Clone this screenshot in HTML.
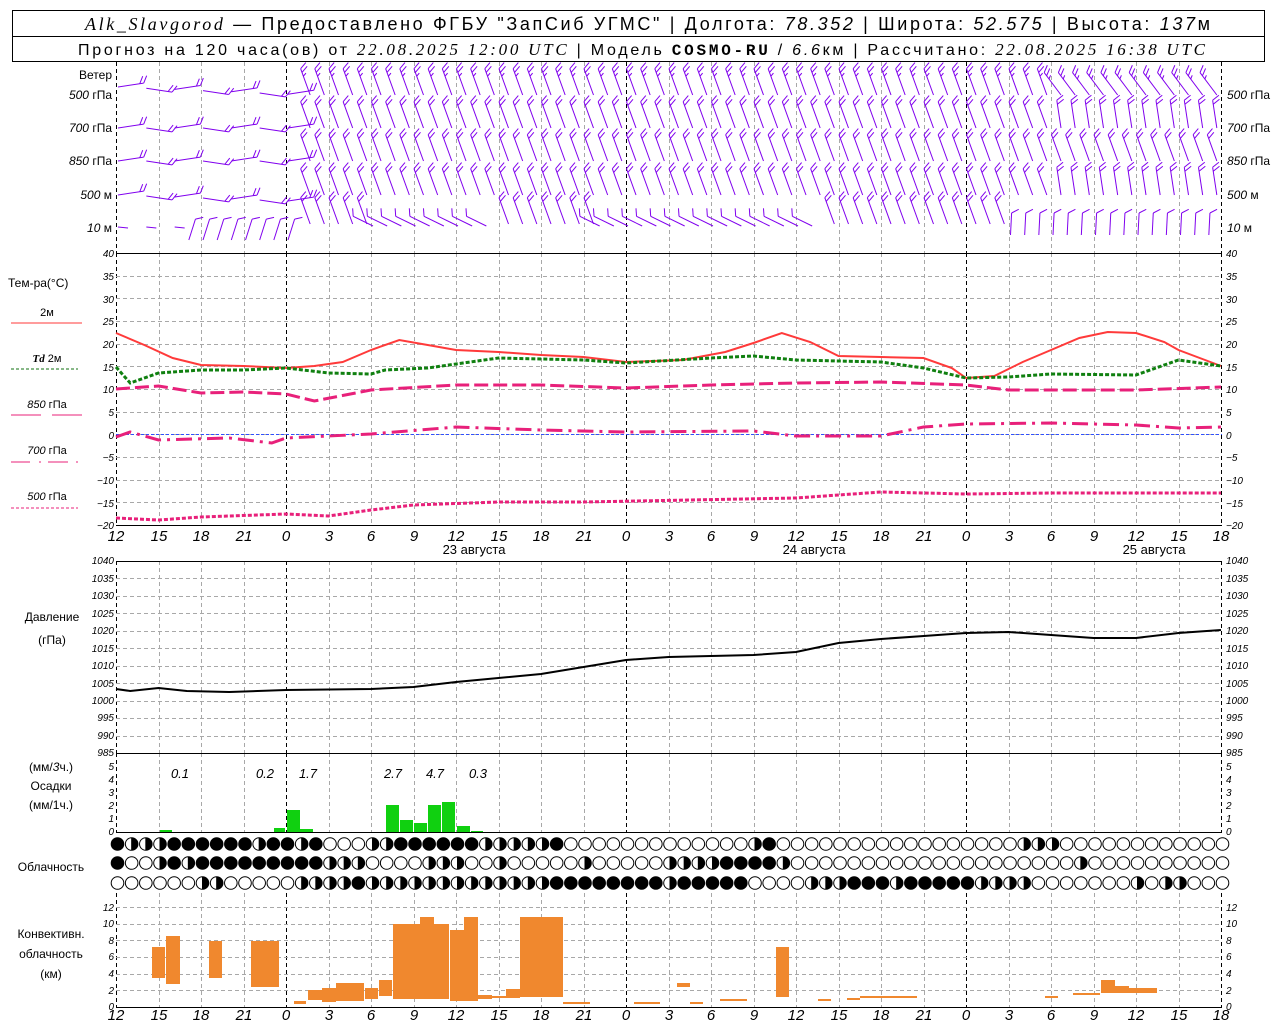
<!DOCTYPE html>
<html><head><meta charset="utf-8">
<style>
html,body{margin:0;padding:0;background:#fff;}
body{width:1280px;height:1024px;overflow:hidden;position:relative;font-family:"Liberation Sans","DejaVu Sans",sans-serif;}
svg{position:absolute;left:0;top:0;}
.it{font-style:italic;}
.lab{font-size:12px;fill:#000;}
.ax{font-size:10px;font-style:italic;fill:#000;font-family:"Liberation Sans",sans-serif;}
.xl{font-size:15px;font-style:italic;fill:#000;}
</style></head><body>
<svg id="s" width="1280" height="1024" xmlns="http://www.w3.org/2000/svg">
<g id="g"></g>
<rect x="12.5" y="10.5" width="1252" height="51" fill="none" stroke="#000"/>
<line x1="12" y1="36.5" x2="1265" y2="36.5" stroke="#000"/>
<text x="85" y="30" font-size="18" fill="#000" textLength="1125" lengthAdjust="spacing"><tspan font-family="Liberation Serif" font-style="italic">Alk_Slavgorod</tspan> — Предоставлено ФГБУ "ЗапСиб УГМС" | Долгота: <tspan font-style="italic">78.352</tspan> | Широта: <tspan font-style="italic">52.575</tspan> | Высота: <tspan font-style="italic">137</tspan>м</text>
<text x="78" y="55" font-size="16" fill="#000" textLength="1127" lengthAdjust="spacing">Прогноз на 120 часа(ов) от <tspan font-family="Liberation Serif" font-style="italic" font-size="17">22.08.2025 12:00 UTC</tspan>  | Модель <tspan font-family="Liberation Mono" font-weight="bold">COSMO-RU</tspan> / <tspan font-style="italic">6.6</tspan>км | Рассчитано: <tspan font-family="Liberation Serif" font-style="italic" font-size="17">22.08.2025 16:38 UTC</tspan></text>

<g class="lab" font-size="11">
<text x="112" y="79" text-anchor="end">Ветер</text>
<text x="112" y="99" text-anchor="end"><tspan class="it">500</tspan> гПа</text>
<text x="112" y="132" text-anchor="end"><tspan class="it">700</tspan> гПа</text>
<text x="112" y="165" text-anchor="end"><tspan class="it">850</tspan> гПа</text>
<text x="112" y="199" text-anchor="end"><tspan class="it">500</tspan> м</text>
<text x="112" y="232" text-anchor="end"><tspan class="it">10</tspan>   м</text>
<text x="1227" y="99"><tspan class="it">500</tspan> гПа</text>
<text x="1227" y="132"><tspan class="it">700</tspan> гПа</text>
<text x="1227" y="165"><tspan class="it">850</tspan> гПа</text>
<text x="1227" y="199"><tspan class="it">500</tspan> м</text>
<text x="1227" y="232"><tspan class="it">10</tspan>   м</text>
</g>

<g class="lab" font-size="12">
<text x="8" y="287">Тем-ра(°C)</text>
<text x="47" y="316" text-anchor="middle" font-size="11">2м</text>
<text x="47" y="362" text-anchor="middle" font-size="11"><tspan font-family="Liberation Serif" font-style="italic" font-weight="bold">Td</tspan>  2м</text>
<text x="47" y="408" text-anchor="middle" font-size="11"><tspan class="it">850</tspan> гПа</text>
<text x="47" y="454" text-anchor="middle" font-size="11"><tspan class="it">700</tspan> гПа</text>
<text x="47" y="500" text-anchor="middle" font-size="11"><tspan class="it">500</tspan> гПа</text>
<text x="52" y="621" text-anchor="middle">Давление</text>
<text x="52" y="644" text-anchor="middle">(гПа)</text>
<text x="51" y="771" text-anchor="middle">(мм/<tspan class="it">3</tspan>ч.)</text>
<text x="51" y="790" text-anchor="middle">Осадки</text>
<text x="51" y="809" text-anchor="middle">(мм/1ч.)</text>
<text x="51" y="871" text-anchor="middle">Облачность</text>
<text x="51" y="938" text-anchor="middle">Конвективн.</text>
<text x="51" y="958" text-anchor="middle">облачность</text>
<text x="51" y="978" text-anchor="middle">(км)</text>
</g>
<line x1="11" y1="323" x2="82" y2="323" stroke="#ff3a3a" stroke-width="1"/>
<line x1="11" y1="369" x2="78" y2="369" stroke="#107010" stroke-dasharray="3,2"/>
<line x1="11" y1="415" x2="41" y2="415" stroke="#e8207a"/><line x1="52" y1="415" x2="82" y2="415" stroke="#e8207a"/>
<line x1="11" y1="462" x2="30" y2="462" stroke="#e8207a"/><line x1="39" y1="462" x2="41" y2="462" stroke="#e8207a"/><line x1="48" y1="462" x2="68" y2="462" stroke="#e8207a"/><line x1="76" y1="462" x2="78" y2="462" stroke="#e8207a"/>
<line x1="11" y1="508" x2="78" y2="508" stroke="#e8207a" stroke-dasharray="3,2"/>

<g class="ax" text-anchor="end">
<text x="114" y="257">40</text><text x="114" y="280">35</text><text x="114" y="303">30</text><text x="114" y="325">25</text><text x="114" y="348">20</text><text x="114" y="371">15</text><text x="114" y="393">10</text><text x="114" y="416">5</text><text x="114" y="439">0</text><text x="114" y="461">−5</text><text x="114" y="484">−10</text><text x="114" y="507">−15</text><text x="114" y="529">−20</text>
</g>
<g class="ax">
<text x="1226" y="257">40</text><text x="1226" y="280">35</text><text x="1226" y="303">30</text><text x="1226" y="325">25</text><text x="1226" y="348">20</text><text x="1226" y="371">15</text><text x="1226" y="393">10</text><text x="1226" y="416">5</text><text x="1226" y="439">0</text><text x="1226" y="461">−5</text><text x="1226" y="484">−10</text><text x="1226" y="507">−15</text><text x="1226" y="529">−20</text>
</g>
<g class="ax" text-anchor="end" font-size="9">
<text x="114" y="564">1040</text><text x="114" y="582">1035</text><text x="114" y="599">1030</text><text x="114" y="617">1025</text><text x="114" y="634">1020</text><text x="114" y="652">1015</text><text x="114" y="669">1010</text><text x="114" y="687">1005</text><text x="114" y="704">1000</text><text x="114" y="721">995</text><text x="114" y="739">990</text><text x="114" y="756">985</text>
<text x="114" y="770">5</text><text x="114" y="783">4</text><text x="114" y="796">3</text><text x="114" y="809">2</text><text x="114" y="822">1</text><text x="114" y="835">0</text>
<text x="114" y="911">12</text><text x="114" y="927">10</text><text x="114" y="944">8</text><text x="114" y="960">6</text><text x="114" y="977">4</text><text x="114" y="994">2</text><text x="114" y="1010">0</text>
</g>
<g class="ax" font-size="9">
<text x="1226" y="564">1040</text><text x="1226" y="582">1035</text><text x="1226" y="599">1030</text><text x="1226" y="617">1025</text><text x="1226" y="634">1020</text><text x="1226" y="652">1015</text><text x="1226" y="669">1010</text><text x="1226" y="687">1005</text><text x="1226" y="704">1000</text><text x="1226" y="721">995</text><text x="1226" y="739">990</text><text x="1226" y="756">985</text>
<text x="1226" y="770">5</text><text x="1226" y="783">4</text><text x="1226" y="796">3</text><text x="1226" y="809">2</text><text x="1226" y="822">1</text><text x="1226" y="835">0</text>
<text x="1226" y="911">12</text><text x="1226" y="927">10</text><text x="1226" y="944">8</text><text x="1226" y="960">6</text><text x="1226" y="977">4</text><text x="1226" y="994">2</text><text x="1226" y="1010">0</text>
</g>
<g class="xl" text-anchor="middle">
<text x="116" y="541">12</text><text x="159" y="541">15</text><text x="201" y="541">18</text><text x="244" y="541">21</text><text x="286" y="541">0</text><text x="329" y="541">3</text><text x="371" y="541">6</text><text x="414" y="541">9</text><text x="456" y="541">12</text><text x="499" y="541">15</text><text x="541" y="541">18</text><text x="584" y="541">21</text><text x="626" y="541">0</text><text x="669" y="541">3</text><text x="711" y="541">6</text><text x="754" y="541">9</text><text x="796" y="541">12</text><text x="839" y="541">15</text><text x="881" y="541">18</text><text x="924" y="541">21</text><text x="966" y="541">0</text><text x="1009" y="541">3</text><text x="1051" y="541">6</text><text x="1094" y="541">9</text><text x="1136" y="541">12</text><text x="1179" y="541">15</text><text x="1221" y="541">18</text>
</g>
<g class="xl" text-anchor="middle">
<text x="116" y="1020">12</text><text x="159" y="1020">15</text><text x="201" y="1020">18</text><text x="244" y="1020">21</text><text x="286" y="1020">0</text><text x="329" y="1020">3</text><text x="371" y="1020">6</text><text x="414" y="1020">9</text><text x="456" y="1020">12</text><text x="499" y="1020">15</text><text x="541" y="1020">18</text><text x="584" y="1020">21</text><text x="626" y="1020">0</text><text x="669" y="1020">3</text><text x="711" y="1020">6</text><text x="754" y="1020">9</text><text x="796" y="1020">12</text><text x="839" y="1020">15</text><text x="881" y="1020">18</text><text x="924" y="1020">21</text><text x="966" y="1020">0</text><text x="1009" y="1020">3</text><text x="1051" y="1020">6</text><text x="1094" y="1020">9</text><text x="1136" y="1020">12</text><text x="1179" y="1020">15</text><text x="1221" y="1020">18</text>
</g>
<g font-size="13" fill="#000" text-anchor="middle">
<text x="474" y="554">23 августа</text><text x="814" y="554">24 августа</text><text x="1154" y="554">25 августа</text>
</g>
<g class="it" font-size="13" fill="#000" text-anchor="middle">
<text x="180" y="778">0.1</text><text x="265" y="778">0.2</text><text x="308" y="778">1.7</text><text x="393" y="778">2.7</text><text x="435" y="778">4.7</text><text x="478" y="778">0.3</text>
</g>
</svg>
<script>
(function(){
var NS="http://www.w3.org/2000/svg",G=document.getElementById('g');
function el(n,a){var e=document.createElementNS(NS,n);for(var k in a)e.setAttribute(k,a[k]);G.appendChild(e);return e;}
function X(h){return 116+h*340/24;}
function line(x1,y1,x2,y2,c,w,d){var a={x1:x1,y1:y1,x2:x2,y2:y2,stroke:c,'stroke-width':w||1};if(d)a['stroke-dasharray']=d;el('line',a);}
var secs=[[62,253],[253,525],[561,753],[753,832],[893,1007]];
for(var h=0;h<=78;h+=3){var x=Math.round(X(h))+0.5;var mid=(h%24==12)||h==0||h==78;
 secs.forEach(function(s){line(x,s[0],x,s[1],mid?'#000':'#a8a8a8',1,'4,3');});}
function TY(t){return 253+(40-t)*272/60;}
for(var t=35;t>=-15;t-=5){var y=Math.round(TY(t))+0.5;line(116,y,1222,y,'#a8a8a8',1,'4,3');}
function PY(p){return 561+(1040-p)*192/55;}
for(var p=1035;p>=990;p-=5){var y=Math.round(PY(p))+0.5;line(116,y,1222,y,'#a8a8a8',1,'4,3');}
function CY(k){return 1007-k*100/12;}
for(var k=2;k<=12;k+=2){var y=Math.round(CY(k))+0.5;line(116,y,1222,y,'#a8a8a8',1,'4,3');}
[253.5,525.5,561.5,753.5,832.5,1007.5].forEach(function(y){line(116,y,1222,y,'#000',1);});
line(116,434.5,1222,434.5,'#3050ff',1,'3,2');
function poly(pts,c,w,d){var s=pts.map(function(p){return X(p[0]).toFixed(1)+','+p[1];}).join(' ');var a={points:s,fill:'none',stroke:c,'stroke-width':w};if(d)a['stroke-dasharray']=d;el('polyline',a);}
poly([[0,333],[2,345],[4,358],[6,365],[9,366],[12,368],[14,366],[16,362],[18,350],[20,340],[22,345],[24,350],[27,352],[30,355],[33,357],[36,362],[40,360],[43,352],[45,343],[47,333],[49,342],[51,356],[54,357],[57,358],[59,368],[60,378],[62,376],[64,362],[66,350],[68,338],[70,332],[72,333],[74,342],[75,350],[78,366]],'#ff3a3a',2);
poly([[0,367],[1,383],[3,373],[6,370],[9,370],[12,368],[15,373],[18,374],[19,370],[22,368],[27,358],[33,360],[36,363],[42,358],[45,356],[48,360],[54,362],[57,368],[60,378],[63,377],[66,374],[72,375],[75,360],[78,366]],'#108010',3,'4,2');
poly([[0,389],[3,386],[6,393],[9,392],[12,394],[14,401],[18,390],[24,385],[30,385],[36,388],[42,385],[48,383],[54,382],[60,385],[63,390],[72,390],[78,387]],'#e8207a',3,'14,5');
poly([[0,437],[1,432],[3,440],[8,438],[11,443],[12,438],[18,434],[24,427],[30,430],[36,432],[45,431],[48,436],[54,436],[57,427],[60,424],[66,423],[72,425],[75,428],[78,427]],'#e8207a',3,'16,6,3,6');
poly([[0,518],[3,520],[6,517],[12,514],[15,516],[18,510],[21,505],[27,502],[33,502],[48,498],[54,492],[60,494],[66,493],[78,493]],'#e8207a',3,'4,2');
poly([[0,689],[1,691],[3,688],[5,691],[8,692],[12,690],[18,689],[21,687],[24,682],[30,674],[36,660],[39,657],[45,655],[48,652],[51,643],[54,639],[60,633],[63,632],[69,638],[72,638],[75,633],[78,630]],'#000',2);
[[160,172,830],[274,285,828],[287,300,810],[300,313,829],[386,399,805],[400,413,820],[414,427,823],[428,441,805],[442,455,802],[457,470,826],[471,483,831]].forEach(function(b){el('rect',{x:b[0],y:b[2],width:b[1]-b[0],height:832-b[2],fill:'#10d010'});});
[[152,165,947,978],[166,180,936,984],[209,222,941,978],[251,279,941,987],[294,306,1001,1004],[308,322,990,1000],[322,336,988,1002],[336,364,983,1001],[365,378,988,999],[379,392,980,996],[393,420,924,999],[420,434,917,999],[434,449,924,999],[450,464,930,1001],[464,478,917,1001],[478,492,995,999],[492,506,996,998],[506,520,989,998],[520,534,917,997],[534,548,917,997],[548,563,917,997],[563,590,1002,1004],[634,660,1002,1004],[677,690,983,987],[690,703,1002,1004],[720,747,999,1001],[776,789,947,997],[818,831,999,1001],[847,860,998,1000],[860,917,996,998],[1045,1058,996,998],[1073,1100,993,995],[1101,1115,980,993],[1115,1129,986,993],[1129,1157,988,993]].forEach(function(b){el('rect',{x:b[0],y:b[2],width:b[1]-b[0],height:b[3]-b[2],fill:'#f0882e'});});
var rows=["FPPPFFFFFFPFFPFOOOPPFFFFFFPPPPPFOOOOOOOOOOOOOPFOOOOOOOOOOOOOOOOOPPPOOOOOOOOOOOO",
"FOOPFPFFFFFFFFFPPPOOOOPPPOOPOOOOOPOOOOOPPPPFFFFPOOOOOOOOOOOOOOOOOOOOPOOOOOOOOOO",
"OOOOOOPPOOOOOPPPPFPPPPPPPPPPPPPFFFFFFFFPFFFFFOOOOPPPFFFPFFFFFPPPPOOOOOOOPOPPOOO"];
var ry=[844,863,883];
rows.forEach(function(r,i){for(var j=0;j<79;j++){var c=r[j]||'O';var cx=X(j)+1.5,cy=ry[i];
 el('circle',{cx:cx,cy:cy,r:6.3,fill:c=='F'?'#000':'#fff',stroke:'#000','stroke-width':1});
 if(c=='P'){el('path',{d:'M'+cx+','+(cy-6.3)+' A6.3,6.3 0 0 1 '+cx+','+(cy+6.3)+' Z',fill:'#000'});line(cx,cy-6.3,cx,cy+6.3,'#000',1);}
}});
var C='#8000ee';
function barb(x,y,ux,uy,L,n,sg){var ex=x+ux*L,ey=y+uy*L;line(x,y,ex,ey,C,1);
 var a=sg*Math.PI/3,bx=ux*Math.cos(a)-uy*Math.sin(a),by=ux*Math.sin(a)+uy*Math.cos(a);
 for(var i=0;i<n;i++){var px=ex-ux*i*4,py=ey-uy*i*4,l=(i==n-1&&n>2)?4:8;line(px,py,px+bx*l,py+by*l,C,1);}}
var lv=[95,128,161,195,228];
for(var h=0;h<=77;h++){var x=X(h)+2;
 lv.forEach(function(y,i){
  if(h<13){ if(i==4&&h<5){if(h%2==0)line(x,y-1,x+10,y,C,1);return;}
    if(i==4){barb(x,y+12,0.3,-0.95,22,1,1);return;}
    if(h%2==1)return;
    var dy=(i==0)?-8+h*0.6:(i==3?h*0.5:0);
    var sl=(h%4==0)?-0.15:0.15;
    barb(x,y+dy,0.99,sl,26,2,-1);}
  else if(i==4&&((h>=18&&h<27)||(h>=34&&h<50)||h>=63)){
    if(h>=63) barb(x,y+7,0.05,-1,22,1,1); else barb(x,y-2,-0.9,-0.44,22,1,1);}
  else{ var n=(i==0)?3:2; var s=(h>=66&&i!=2&&i!=4)?0.6:0.34;
    var ux=-s,uy=-Math.sqrt(1-s*s); if(h>=66&&(i==1||i==3)){ux=-0.15;uy=-0.99;}
    barb(x+8,y+(i==4?-4:0),ux,uy,28,n,1);}
 });}
})();
</script>
</body></html>
